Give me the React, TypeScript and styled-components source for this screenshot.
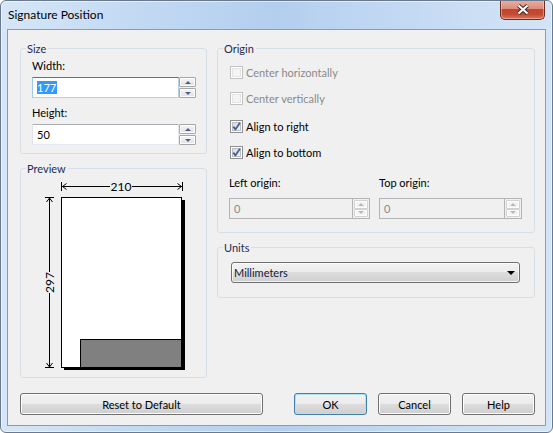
import React from "react";
import styled, { createGlobalStyle, css } from "styled-components";

const UI_FONT = `"Segoe UI", Lato, "Liberation Sans", sans-serif`;

const GlobalStyle = createGlobalStyle`
  html, body {
    margin: 0;
    padding: 0;
    background: #ffffff;
  }
  body {
    font-family: ${UI_FONT};
    font-size: 11px;
    font-weight: 400;
    color: #000;
  }
  * {
    box-sizing: border-box;
  }
`;

// Window frame
const Window = styled.div`
  width: 553px;
  height: 433px;
  display: flex;
  flex-direction: column;
  border: 1px solid #6a7a8e;
  border-radius: 6px;
  overflow: hidden;
  background: linear-gradient(
    to right,
    #d6e6f7 0%,
    #c2d9f2 25%,
    #b3cfee 50%,
    #c4daf3 75%,
    #d3e4f6 100%
  );
  box-shadow: inset 0 0 0 1px rgba(255, 255, 255, 0.55);
`;

const TitleBar = styled.div`
  height: 28px;
  flex: none;
  display: flex;
  align-items: flex-start;
  padding-left: 7px;
`;

const Title = styled.span`
  padding-top: 6px;
  line-height: 15px;
  font-size: 12px;
  color: #000;
`;

const CloseButton = styled.div`
  margin-left: auto;
  margin-right: 7px;
  margin-top: -1px;
  width: 45px;
  height: 20px;
  display: flex;
  align-items: center;
  justify-content: center;
  border: 1px solid #6d2b22;
  border-top: none;
  border-radius: 0 0 5px 5px;
  background: linear-gradient(
    #eab1a4 0%,
    #dc8c79 45%,
    #c5452f 50%,
    #c24a33 75%,
    #d9795d 100%
  );
  box-shadow: inset 0 0 0 1px rgba(255, 220, 210, 0.45);
`;

const Client = styled.div`
  flex: 1;
  margin: 0 6px 6px 6px;
  border: 1px solid #8a9cb1;
  background: #f0f0f0;
  padding: 18px 10px 0 12px;
  display: flex;
  flex-direction: column;
`;

const Columns = styled.div`
  display: flex;
  gap: 10px;
  align-items: flex-start;
`;

const Column = styled.div<{ $width: number }>`
  width: ${(p) => p.$width}px;
  display: flex;
  flex-direction: column;
  gap: 14px;
`;

// Group box
const Group = styled.div<{ $height: number; $pad: string }>`
  position: relative;
  height: ${(p) => p.$height}px;
  border: 1px solid #d5dfe5;
  border-radius: 3px;
  padding: ${(p) => p.$pad};
`;

const Caption = styled.span`
  position: absolute;
  top: -8px;
  left: 5px;
  padding: 0 2px 0 1px;
  line-height: 15px;
  background: #f0f0f0;
  color: #1e2d58;
`;

const Label = styled.div<{ $gapBelow?: number; $gapAbove?: number }>`
  line-height: 15px;
  margin-top: ${(p) => p.$gapAbove ?? 0}px;
  margin-bottom: ${(p) => p.$gapBelow ?? 4}px;
  color: #000;
`;

// Edit + up/down
const SpinField = styled.div`
  display: flex;
  height: 21px;
`;

const Edit = styled.div<{ $focused?: boolean; $disabled?: boolean }>`
  flex: 1;
  height: 21px;
  display: flex;
  align-items: center;
  padding-left: 4px;
  line-height: 15px;
  background: #ffffff;
  border: 1px solid;
  border-color: #abadb3 #e3e9ef #e3e9ef #e2e3ea;
  ${(p) =>
    p.$focused &&
    css`
      border-color: #3d7bad #b5cfe7 #b5cfe7 #a4c9e3;
    `}
  ${(p) =>
    p.$disabled &&
    css`
      background: #f0f0f0;
      border-color: #b4b4b4;
      color: #8a8a8a;
    `}
`;

const Selected = styled.span`
  display: inline-block;
  line-height: 13px;
  padding: 0 1px 0 0;
  background: #3399ff;
  color: #ffffff;
`;

const Spinner = styled.div<{ $disabled?: boolean }>`
  width: 17px;
  flex: none;
  display: flex;
  flex-direction: column;
  gap: 1px;
  ${(p) =>
    p.$disabled &&
    css`
      border: 1px solid #b4b4b4;
      border-left: none;
      padding: 1px;
      gap: 0;
    `}
`;

const SpinButton = styled.div<{ $disabled?: boolean }>`
  flex: 1;
  display: flex;
  align-items: center;
  justify-content: center;
  border: 1px solid #a7a7a7;
  border-radius: 1px;
  background: linear-gradient(#f6f6f6, #e1e1e1);
  box-shadow: inset 0 0 0 1px #fdfdfd;
  ${(p) =>
    p.$disabled &&
    css`
      border-color: #d2d2d2;
      background: #f4f4f4;
    `}
`;

const Arrow = styled.span<{ $down?: boolean; $color: string }>`
  width: 0;
  height: 0;
  border-left: 3px solid transparent;
  border-right: 3px solid transparent;
  ${(p) =>
    p.$down
      ? css`
          border-top: 3px solid ${p.$color};
        `
      : css`
          border-bottom: 3px solid ${p.$color};
        `}
`;

// Checkbox
const CheckRow = styled.div<{ $disabled?: boolean; $top: number }>`
  display: flex;
  align-items: center;
  gap: 3px;
  height: 16px;
  margin-left: 1px;
  margin-top: ${(p) => p.$top}px;
  color: ${(p) => (p.$disabled ? "#8a8a8a" : "#000")};
`;

const Box = styled.span<{ $disabled?: boolean }>`
  width: 13px;
  height: 13px;
  flex: none;
  display: flex;
  align-items: center;
  justify-content: center;
  border: 1px solid #8e8f8f;
  background: linear-gradient(135deg, #d3d7dc, #f7f7f7);
  box-shadow: inset 0 0 0 1px #ffffff, inset 0 0 0 2px #b9bec4;
  ${(p) =>
    p.$disabled &&
    css`
      border-color: #c2c2c2;
      background: #f4f4f4;
      box-shadow: inset 0 0 0 1px #ffffff, inset 0 0 0 2px #e4e4e4;
    `}
`;

const OriginFields = styled.div`
  display: grid;
  grid-template-columns: 141px 143px;
  column-gap: 9px;
  margin-top: 15px;
`;

// Combo box
const Combo = styled.div`
  height: 21px;
  display: flex;
  align-items: center;
  justify-content: space-between;
  padding: 0 4px 0 2px;
  border: 1px solid #707070;
  border-radius: 3px;
  background: linear-gradient(#f2f2f2 0%, #ebebeb 50%, #dddddd 50%, #cfcfcf 100%);
  box-shadow: inset 0 0 0 1px rgba(255, 255, 255, 0.7);
  color: #111a3a;
  line-height: 15px;
`;

const ComboArrow = styled.span`
  width: 0;
  height: 0;
  border-left: 4px solid transparent;
  border-right: 4px solid transparent;
  border-top: 4px solid #000;
`;

// Buttons
const ButtonRow = styled.div`
  display: flex;
  justify-content: space-between;
  margin-top: 15px;
`;

const ButtonGroup = styled.div`
  display: flex;
  gap: 11px;
`;

const PushButton = styled.button<{ $width: number; $default?: boolean }>`
  width: ${(p) => p.$width}px;
  height: 22px;
  padding: 0;
  font-family: ${UI_FONT};
  font-size: 11px;
  font-weight: 400;
  color: #000;
  border: 1px solid #707070;
  border-radius: 3px;
  background: linear-gradient(#f2f2f2 0%, #ebebeb 50%, #dddddd 50%, #cfcfcf 100%);
  box-shadow: inset 0 0 0 1px #fcfcfc;
  ${(p) =>
    p.$default &&
    css`
      border-color: #3c7fb1;
      box-shadow: inset 0 0 0 1px #aee0f8;
    `}
`;

const PreviewCanvas = styled.svg`
  display: block;
`;

const SpinBox = ({
  value,
  focused,
  disabled,
}: {
  value: string;
  focused?: boolean;
  disabled?: boolean;
}) => {
  const arrowColor = disabled ? "#b8b8b8" : "#4c5f8e";
  return (
    <SpinField>
      <Edit $focused={focused} $disabled={disabled}>
        {focused ? <Selected>{value}</Selected> : value}
      </Edit>
      <Spinner $disabled={disabled}>
        <SpinButton $disabled={disabled}>
          <Arrow $color={arrowColor} />
        </SpinButton>
        <SpinButton $disabled={disabled}>
          <Arrow $down $color={arrowColor} />
        </SpinButton>
      </Spinner>
    </SpinField>
  );
};

const CheckBox = ({
  label,
  checked,
  disabled,
  top,
}: {
  label: string;
  checked?: boolean;
  disabled?: boolean;
  top: number;
}) => (
  <CheckRow $disabled={disabled} $top={top}>
    <Box $disabled={disabled}>
      {checked && (
        <svg width="11" height="11" viewBox="0 0 11 11">
          <path
            d="M2.3 5.6 L4.4 8.4 L8.9 1.8"
            fill="none"
            stroke="#4a5f97"
            strokeWidth="1.8"
            strokeLinejoin="round"
          />
        </svg>
      )}
    </Box>
    <span>{label}</span>
  </CheckRow>
);

const Preview = () => (
  <PreviewCanvas width="185" height="208" viewBox="0 0 185 208">
    {/* width dimension */}
    <g stroke="#000" strokeWidth="1" fill="none">
      <line x1="40.5" y1="13" x2="40.5" y2="22" />
      <line x1="161.5" y1="13" x2="161.5" y2="22" />
      <line x1="41" y1="17.5" x2="89" y2="17.5" />
      <line x1="111" y1="17.5" x2="161" y2="17.5" />
      <polyline points="45.5,14.5 41.5,17.5 45.5,20.5" />
      <polyline points="156.5,14.5 160.5,17.5 156.5,20.5" />

      {/* height dimension */}
      <line x1="24" y1="28.5" x2="33" y2="28.5" />
      <line x1="24" y1="198.5" x2="33" y2="198.5" />
      <line x1="28.5" y1="29" x2="28.5" y2="103" />
      <line x1="28.5" y1="124" x2="28.5" y2="198" />
      <polyline points="25.5,33 28.5,29 31.5,33" />
      <polyline points="25.5,194 28.5,198 31.5,194" />
    </g>
    <text
      x="100"
      y="21.5"
      textAnchor="middle"
      fontFamily={UI_FONT}
      fontSize="12"
      fill="#000"
    >
      210
    </text>
    <text
      x="28.5"
      y="113.5"
      textAnchor="middle"
      dominantBaseline="central"
      transform="rotate(-90 28.5 113.5)"
      fontFamily={UI_FONT}
      fontSize="12"
      fill="#000"
    >
      297
    </text>

    {/* page with shadow */}
    <rect x="43" y="31" width="121" height="170" fill="#000" />
    <rect x="40.5" y="28.5" width="120" height="170" fill="#fff" stroke="#000" />
    <rect x="59.5" y="170.5" width="101" height="28" fill="#808080" stroke="#000" />
  </PreviewCanvas>
);

function App() {
  return (
    <>
      <GlobalStyle />
      <Window>
        <TitleBar>
          <Title>Signature Position</Title>
          <CloseButton>
            <svg width="14" height="11" viewBox="0 0 14 11">
              <g strokeLinecap="butt">
                <path d="M2.5 1.5 L11.5 9.5 M11.5 1.5 L2.5 9.5" stroke="#3d2420" strokeWidth="4" />
                <path d="M2.5 1.5 L11.5 9.5 M11.5 1.5 L2.5 9.5" stroke="#ffffff" strokeWidth="2.2" />
              </g>
            </svg>
          </CloseButton>
        </TitleBar>

        <Client>
          <Columns>
            <Column $width={187}>
              <Group $height={106} $pad="9px 10px 0 11px">
                <Caption>Size</Caption>
                <Label>Width:</Label>
                <SpinBox value="177" focused />
                <Label $gapAbove={7}>Height:</Label>
                <SpinBox value="50" />
              </Group>

              <Group $height={210} $pad="0">
                <Caption>Preview</Caption>
                <Preview />
              </Group>
            </Column>

            <Column $width={318}>
              <Group $height={185} $pad="0 12px 0 11px">
                <Caption>Origin</Caption>
                <CheckBox label="Center horizontally" disabled top={15} />
                <CheckBox label="Center vertically" disabled top={10} />
                <CheckBox label="Align to right" checked top={12} />
                <CheckBox label="Align to bottom" checked top={10} />
                <OriginFields>
                  <div>
                    <Label $gapBelow={8}>Left origin:</Label>
                    <SpinBox value="0" disabled />
                  </div>
                  <div>
                    <Label $gapBelow={8}>Top origin:</Label>
                    <SpinBox value="0" disabled />
                  </div>
                </OriginFields>
              </Group>

              <Group $height={51} $pad="14px 14px 0 13px">
                <Caption>Units</Caption>
                <Combo>
                  <span>Millimeters</span>
                  <ComboArrow />
                </Combo>
              </Group>
            </Column>
          </Columns>

          <ButtonRow>
            <PushButton $width={243}>Reset to Default</PushButton>
            <ButtonGroup>
              <PushButton $width={73} $default>
                OK
              </PushButton>
              <PushButton $width={73}>Cancel</PushButton>
              <PushButton $width={73}>Help</PushButton>
            </ButtonGroup>
          </ButtonRow>
        </Client>
      </Window>
    </>
  );
}

export default App;
